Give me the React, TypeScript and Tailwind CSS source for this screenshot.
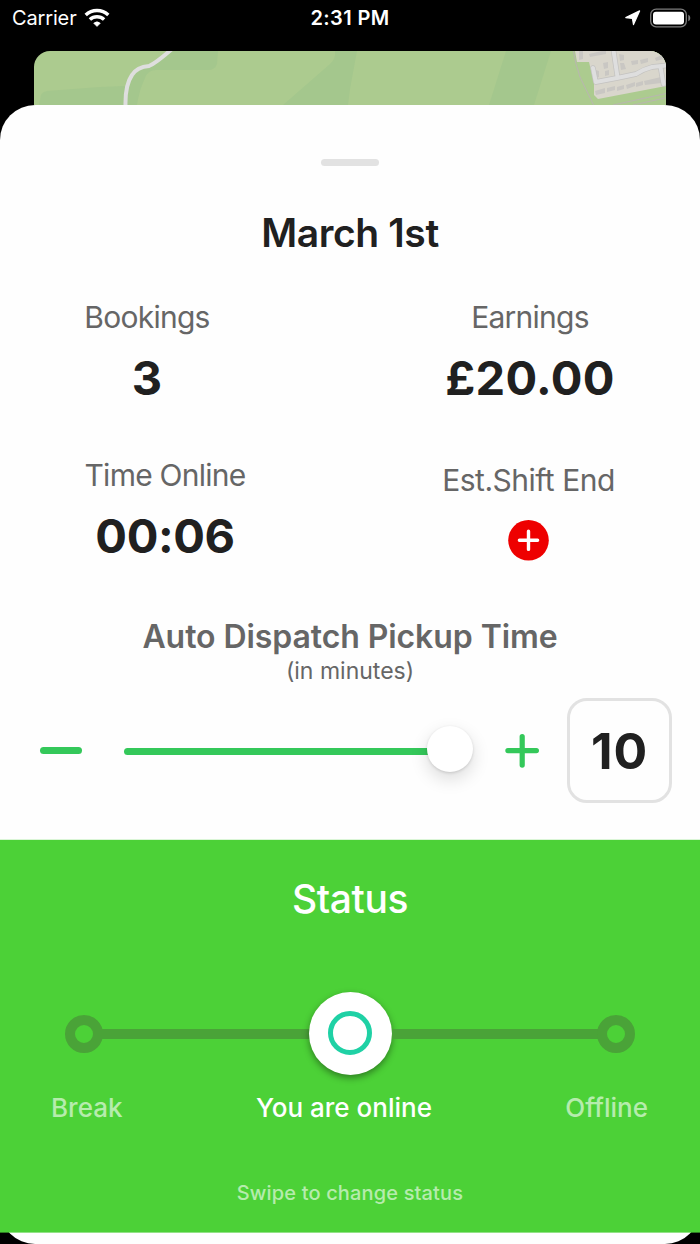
import React from 'react';

const StatusBar: React.FC = () => (
  <header className="flex h-[51px] items-start justify-between pl-3 pr-[9px] text-white">
    <div className="flex h-9 w-[199px] items-center">
      <span className="text-[20px] leading-none tracking-[-0.15px]">Carrier</span>
      <svg className="ml-[7px] -mt-px h-5 w-[26px]" viewBox="0 0 26 20" fill="none" stroke="currentColor" strokeWidth="3.4">
        <path d="M1.7 7.1A16.3 16.3 0 0 1 24.3 7.1" />
        <path d="M5.9 11.6A10.3 10.3 0 0 1 20.1 11.6" />
        <path d="M9.7 15.2A5.1 5.1 0 0 1 16.3 15.2L13 18.5Z" fill="currentColor" stroke="currentColor" strokeWidth="0.6" strokeLinejoin="round" />
      </svg>
    </div>
    <span className="flex h-9 items-center text-[20px] leading-none font-semibold tracking-[0.4px]">2:31 PM</span>
    <div className="flex h-9 w-[202px] items-center justify-end">
      <svg className="mr-[9px] h-4 w-4" viewBox="0 0 16 16" fill="currentColor" stroke="currentColor" strokeWidth="1.2" strokeLinejoin="round">
        <path d="M0.8 7.6L14.6 0.9L8.5 14.6L7.4 8.4Z" />
      </svg>
      <svg className="-mt-px h-5 w-[41px]" viewBox="0 0 41 20">
        <rect x="0.7" y="1.2" width="35.6" height="17.6" rx="5.5" fill="none" stroke="#7d7d7d" strokeWidth="1.3" />
        <rect x="3" y="3.7" width="31" height="12.8" rx="3" fill="#fff" />
        <path d="M38.3 6.8C40.9 7.6 40.9 12.4 38.3 13.2Z" fill="#7d7d7d" />
      </svg>
    </div>
  </header>
);

const MapPreview: React.FC = () => (
  <div className="mx-[34px] h-[54px] overflow-hidden rounded-t-[16px] bg-[#accb8f]">
    <svg className="block h-[54px] w-[632px]" viewBox="0 0 632 54" fill="none">
      {/* fields */}
      <g fill="#a4c78d">
        <path d="M5 54L7 44Q8 41 13 40L66 36L90 35Q93 36 92 54Z" />
        <path d="M137 0H184L183 13Q181 19 174 19H122Q114 19 111 27Q105 40 103 54H91Q93 32 104 17L118 14Z" />
        <path d="M301 0Q302 8 296 13L249 54H314L316 38L323 0Z" />
        <path d="M472 0H517L500 54H455Z" />
      </g>
      <path d="M541 0H632V54H559L544 16Z" fill="#accb8f" />
      {/* town */}
      <path d="M541 0L543 11H555L560 32V44L564 48L632 35V0Z" fill="#d9d6cc" />
      <g fill="#c9c7c3">
        <path d="M545 0H549V8L545 9Z" />
        <path d="M555 3L572 -1V3L556 6Z" />
        <path d="M585 3L590 4V9L586 10Z" />
        <path d="M586 12H590L592 18L587 19Z" />
        <path d="M569 12L574 11V17L570 18Z" />
        <path d="M571 20L575 19V24L571 25Z" />
        <path d="M597 10L604 9V13L598 14Z" />
        <path d="M606 9L614 7V11L607 13Z" />
        <path d="M621 7L630 3V8L622 10Z" />
        <path d="M561 40L571 37V42L562 44Z" />
        <path d="M573 37L581 35V39L573 41Z" />
        <path d="M583 36L590 34V38L583 40Z" />
        <path d="M592 34L601 31V35L593 38Z" />
        <path d="M602 32L609 30V34L602 36Z" />
        <path d="M610 30L627 26V32L611 34Z" />
        <path d="M562 19L565 20V26L562 27Z" />
      </g>
      <g stroke="#c3c2c0" strokeWidth="5.4" strokeLinecap="round" strokeLinejoin="round">
        <path d="M559 17L561.8 31L583 27L602 23Q610 18 618 16L634 14.3" />
        <path d="M579 -4L583.5 26" />
        <path d="M626.5 16L629.5 33" />
      </g>
      <g stroke="#dedede" strokeWidth="4" strokeLinecap="round" strokeLinejoin="round">
        <path d="M559 17L561.8 31L583 27L602 23Q610 18 618 16L634 14.3" />
        <path d="M579 -4L583.5 26" />
        <path d="M626.5 16L629.5 33" />
      </g>
      <g stroke="#b9b5b1" strokeWidth="1">
        <path d="M539.5 0Q541 12 546 26L559.5 54" />
        <path d="M579 54L632 42.5" />
        <path d="M599 54L632 46.8" />
      </g>
      {/* lane */}
      <path d="M138 -2Q122 12 115 15Q103 16 98 24Q91 34 91.5 55" stroke="#dedede" strokeWidth="4" />
    </svg>
  </div>
);

const StatLabel: React.FC<{ children: React.ReactNode }> = ({ children }) => (
  <span className="text-[30px] leading-9 tracking-[-0.75px] text-[#666]">{children}</span>
);

const Stats: React.FC = () => (
  <div className="grid h-[270px] grid-cols-2 grid-rows-[158px_1fr] whitespace-nowrap">
    <div className="ml-[85px] flex w-[124px] flex-col items-center">
      <StatLabel>Bookings</StatLabel>
      <span className="mt-[25px] text-[47px] leading-9 font-bold">3</span>
    </div>
    <div className="ml-[93px] flex w-[174px] flex-col items-center">
      <StatLabel>Earnings</StatLabel>
      <span className="mt-[25px] text-[47px] leading-9 font-bold tracking-[0.3px]">£20.00</span>
    </div>
    <div className="ml-[85px] flex w-[160px] flex-col items-center">
      <StatLabel>Time Online</StatLabel>
      <span className="mt-[25px] text-[47px] leading-9 font-bold tracking-[-0.4px]">00:06</span>
    </div>
    <div className="ml-[92px] flex w-[173px] flex-col items-center pt-[5px]">
      <span className="text-[30px] leading-9 tracking-[-0.5px] text-[#666]">Est.Shift End</span>
      <button className="mt-[22px] text-white">
        <svg className="block h-[41px] w-[41px]" viewBox="0 0 41 41">
          <circle cx="20.5" cy="20.3" r="20.3" fill="#ee0000" />
          <path d="M20.5 11.2V29.4M11.4 20.3H29.6" stroke="currentColor" strokeWidth="3.4" strokeLinecap="round" />
        </svg>
      </button>
    </div>
  </div>
);

const PickupSlider: React.FC = () => (
  <div className="flex h-[105px] items-center pl-10 pr-7">
    <button className="h-[7px] w-[42px] rounded-full bg-[#34c85a]" />
    <div className="relative ml-[42px] mt-[2px] h-[7px] w-[348px] rounded-full bg-[linear-gradient(to_right,#34c85a_320px,transparent_320px)]">
      <div className="absolute -top-[22px] left-[302.5px] h-[46px] w-[46px] rounded-full bg-white shadow-[0_7px_18px_rgba(0,0,0,0.14),0_1px_3px_rgba(0,0,0,0.14)]" />
    </div>
    <svg className="ml-[33px] h-[34px] w-[34px] text-[#34c85a]" viewBox="0 0 34 34">
      <path d="M17.2 2.6V31.1M2.9 16.6H31.4" stroke="currentColor" strokeWidth="5.2" strokeLinecap="round" />
    </svg>
    <div className="ml-auto flex h-[105px] w-[105px] items-center justify-center rounded-[20px] border-[3px] border-[#e2e2e2] text-[50px] leading-none font-bold tracking-[0.8px]">
      10
    </div>
  </div>
);

const StatusPanel: React.FC = () => (
  <section className="h-[394px] border-y border-[#4cd137]/20 border-b-[#4cd137]/60 bg-[#4cd137] bg-clip-padding text-white">
    <h2 className="pt-[39px] text-center text-[39px] leading-10 font-medium tracking-[-0.4px]">Status</h2>
    <div className="mt-[72px] flex h-[84px] items-center px-[65px]">
      <div className="mt-[2px] h-[38px] w-[38px] rounded-full border-[10.5px] border-[#4aa338]" />
      <div className="mt-[2px] -ml-px h-[10px] flex-1 bg-[#4aa338]" />
      <div className="flex h-[83px] w-[83px] items-center justify-center rounded-full bg-white shadow-[0_3px_7px_rgba(0,0,0,0.4)]">
        <div className="h-11 w-11 rounded-full border-[5px] border-[#1fd1a5]" />
      </div>
      <div className="mt-[2px] -mr-px h-[10px] flex-1 bg-[#4aa338]" />
      <div className="mt-[2px] h-[38px] w-[38px] rounded-full border-[10.5px] border-[#4aa338]" />
    </div>
    <div className="mt-[17px] flex justify-between pr-[52px] pl-[51px] text-[26px] leading-8 font-medium">
      <span className="text-white/60">Break</span>
      <span>You are online</span>
      <span className="text-white/60">Offline</span>
    </div>
    <p className="mt-[53px] text-center text-[20px] leading-8 font-medium tracking-[0.15px] text-white/60">Swipe to change status</p>
  </section>
);

const App: React.FC = () => {
  return (
    <div className="h-[1244px] w-[700px] overflow-hidden bg-black font-['Inter',sans-serif] text-[#202020]">
      <StatusBar />
      <MapPreview />
      <main className="h-[1139px] rounded-[35px] bg-[#fefefe]">
        <div className="flex h-[734px] flex-col">
          <div className="mx-auto mt-[54px] h-[7px] w-[58px] rounded-full bg-[#e2e2e2]" />
          <h1 className="mt-[47px] text-center text-[39px] leading-10 font-semibold tracking-[-0.4px]">March 1st</h1>
          <div className="mt-[46px]">
            <Stats />
          </div>
          <div className="mt-12 text-center text-[#666]">
            <h3 className="text-[32px] leading-10 font-semibold tracking-[-0.08px]">Auto Dispatch Pickup Time</h3>
            <p className="-mt-px text-[23px] leading-[30px]">(in minutes)</p>
          </div>
          <div className="mt-3">
            <PickupSlider />
          </div>
        </div>
        <StatusPanel />
      </main>
    </div>
  );
};

export default App;
